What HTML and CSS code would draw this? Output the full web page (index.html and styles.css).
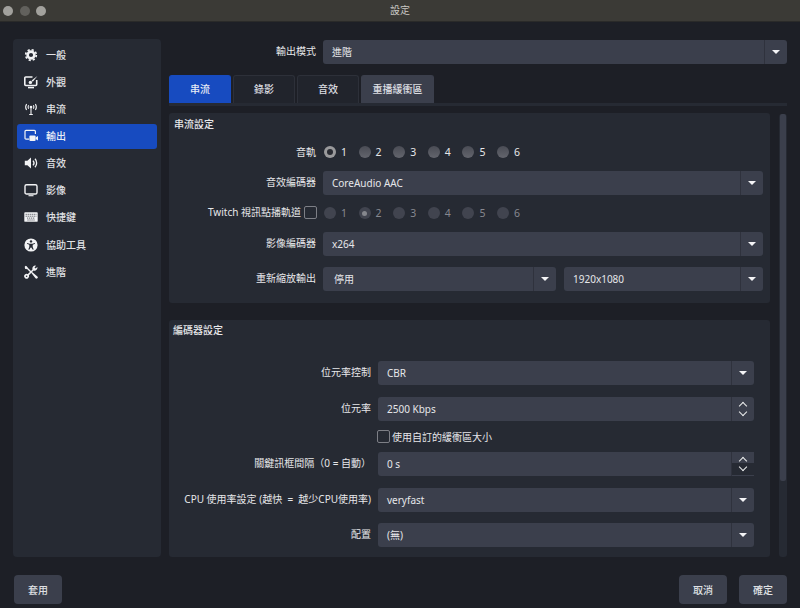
FILE: index.html
```html
<!DOCTYPE html>
<html lang="zh-Hant">
<head>
<meta charset="utf-8">
<title>設定</title>
<link rel="stylesheet" href="styles.css">
</head>
<body>
<div class="window">
  <header class="titlebar">
    <div class="lights"><span class="light"></span><span class="light light-dim"></span><span class="light"></span></div>
    <div class="title">設定</div>
  </header>
  <main class="main">
    <nav class="sidebar">
      <div class="nav-item">
        <svg class="icon" viewBox="0 0 14 14"><circle cx="7" cy="7" r="3.4" fill="none" stroke="currentColor" stroke-width="2.6"/><circle cx="7" cy="7" r="5.3" fill="none" stroke="currentColor" stroke-width="1.7" stroke-dasharray="2.2 1.96"/></svg>
        <span>一般</span>
      </div>
      <div class="nav-item">
        <svg class="icon" viewBox="0 0 14 14"><path d="M8.5 2H1.7a.9.9 0 0 0-.9.9v6.7a.9.9 0 0 0 .9.9h10.1a.9.9 0 0 0 .9-.9V5" fill="none" stroke="currentColor" stroke-width="1.6"/><path d="M4 12.6h6" stroke="currentColor" stroke-width="1.5"/><path d="M13.4.9 7.6 5.6l1.2 1.2z" fill="currentColor"/><circle cx="6.4" cy="7.4" r="1.7" fill="currentColor"/></svg>
        <span>外觀</span>
      </div>
      <div class="nav-item">
        <svg class="icon" viewBox="0 0 14 14"><circle cx="7" cy="5" r="1.3" fill="currentColor"/><path d="M7 5v7.5M5.2 12.5h3.6M4.6 3.2a3.4 3.4 0 0 0 0 3.6M9.4 3.2a3.4 3.4 0 0 1 0 3.6M2.6 2a5.6 5.6 0 0 0 0 6M11.4 2a5.6 5.6 0 0 1 0 6" fill="none" stroke="currentColor" stroke-width="1.1"/></svg>
        <span>串流</span>
      </div>
      <div class="nav-item nav-active">
        <svg class="icon" viewBox="0 0 14 14"><path d="M5 10.2H2a1 1 0 0 1-1-1V2.4a1 1 0 0 1 1-1h8.4a1 1 0 0 1 1 1V5" fill="none" stroke="currentColor" stroke-width="1.2"/><rect x="5.4" y="6.4" width="6.2" height="5.6" rx="1" fill="currentColor"/><path d="M11.6 8.4 14 7v4.4l-2.4-1.4z" fill="currentColor"/></svg>
        <span>輸出</span>
      </div>
      <div class="nav-item">
        <svg class="icon" viewBox="0 0 14 14"><path d="M.8 4.8h2.6L7 1.6v10.8L3.4 9.2H.8z" fill="currentColor"/><path d="M9 4.6a3.6 3.6 0 0 1 0 4.8M11 2.8a6.2 6.2 0 0 1 0 8.4" fill="none" stroke="currentColor" stroke-width="1.3"/></svg>
        <span>音效</span>
      </div>
      <div class="nav-item">
        <svg class="icon" viewBox="0 0 14 14"><rect x="1" y="1.7" width="12" height="9.3" rx="1.6" fill="none" stroke="currentColor" stroke-width="1.4"/><path d="M4.5 12.7h5" stroke="currentColor" stroke-width="1.1"/></svg>
        <span>影像</span>
      </div>
      <div class="nav-item">
        <svg class="icon" viewBox="0 0 14 14"><rect x=".3" y="2.2" width="13.4" height="9.6" rx=".9" fill="currentColor"/><path d="M1.6 4.3h10.8M1.6 6.2h10.8M3 8.1h8M3.4 10h7.2" fill="none" stroke="#262a33" stroke-width=".7" stroke-dasharray="1.3 .7"/></svg>
        <span>快捷鍵</span>
      </div>
      <div class="nav-item nav-item-low">
        <svg class="icon" viewBox="0 0 14 14"><circle cx="7" cy="7" r="6.6" fill="currentColor"/><circle cx="7" cy="3.4" r="1.2" fill="#262a33"/><path d="M3.2 4.9 5.6 5.7h2.8l2.4-.8.3.9-2.4 1v2.1l1 2.5-.9.4L7.3 9.4h-.6l-1.5 2.4-.9-.4 1-2.5V6.8l-2.4-1z" fill="#262a33"/></svg>
        <span>協助工具</span>
      </div>
      <div class="nav-item">
        <svg class="icon" viewBox="0 0 14 14"><path d="M1.8 1.8 7 7" stroke="currentColor" stroke-width="1.4" fill="none"/><path d="M.7 1.7 1.7.7l1.6 1.2.1 1.4-1.1 1-1.2-.6zM7 7.6l.8-.8 5.6 4.6a1.2 1.2 0 0 1-1.9 1.9z" fill="currentColor"/><path d="M9.3 4.7 2.6 11.4" stroke="currentColor" stroke-width="1.5" fill="none"/><path d="M13.3 1.9 11.6 3.5 10.5 2.4 12 .7a2.9 2.9 0 0 0-3.5 3.7l1.1 1.1a2.9 2.9 0 0 0 3.7-3.6zM4.3 9.5a2.4 2.4 0 0 0-3.4 3.4 2.4 2.4 0 0 0 3.4-3.4z" fill="currentColor"/><circle cx="2.6" cy="11.3" r=".8" fill="#262a33"/></svg>
        <span>進階</span>
      </div>
    </nav>
    <section class="content">
      <div class="mode-row">
        <label class="label">輸出模式</label>
        <div class="combo"><span class="combo-text">進階</span><span class="combo-btn"><i class="arrow"></i></span></div>
      </div>
      <div class="tabs">
        <div class="tab tab-active">串流</div>
        <div class="tab">錄影</div>
        <div class="tab">音效</div>
        <div class="tab tab-raised">重播緩衝區</div>
      </div>
      <div class="scroll-area">
        <div class="panels">
          <div class="panel panel-stream">
            <div class="panel-title">串流設定</div>
            <div class="row row-radio">
              <label class="label label-track">音軌</label>
              <div class="radios">
                <span class="radio-item"><i class="radio radio-on"></i>1</span>
                <span class="radio-item"><i class="radio"></i>2</span>
                <span class="radio-item"><i class="radio"></i>3</span>
                <span class="radio-item"><i class="radio"></i>4</span>
                <span class="radio-item"><i class="radio"></i>5</span>
                <span class="radio-item"><i class="radio"></i>6</span>
              </div>
            </div>
            <div class="row">
              <label class="label">音效編碼器</label>
              <div class="combo"><span class="combo-text">CoreAudio AAC</span><span class="combo-btn"><i class="arrow"></i></span></div>
            </div>
            <div class="row row-radio">
              <label class="label label-check">Twitch 視訊點播軌道<i class="check"></i></label>
              <div class="radios radios-off">
                <span class="radio-item"><i class="radio"></i>1</span>
                <span class="radio-item"><i class="radio radio-dot"></i>2</span>
                <span class="radio-item"><i class="radio"></i>3</span>
                <span class="radio-item"><i class="radio"></i>4</span>
                <span class="radio-item"><i class="radio"></i>5</span>
                <span class="radio-item"><i class="radio"></i>6</span>
              </div>
            </div>
            <div class="row">
              <label class="label">影像編碼器</label>
              <div class="combo"><span class="combo-text">x264</span><span class="combo-btn"><i class="arrow"></i></span></div>
            </div>
            <div class="row row-rescale">
              <label class="label">重新縮放輸出</label>
              <div class="pair">
                <div class="combo"><span class="combo-text combo-text-wide">停用</span><span class="combo-btn"><i class="arrow"></i></span></div>
                <div class="combo"><span class="combo-text">1920x1080</span><span class="combo-btn"><i class="arrow"></i></span></div>
              </div>
            </div>
          </div>
          <div class="panel panel-encoder">
            <div class="panel-title panel-title-enc">編碼器設定</div>
            <div class="row row-enc">
              <label class="label">位元率控制</label>
              <div class="combo"><span class="combo-text">CBR</span><span class="combo-btn"><i class="arrow"></i></span></div>
            </div>
            <div class="row row-enc row-flush">
              <label class="label">位元率</label>
              <div class="combo"><span class="combo-text">2500 Kbps</span><span class="combo-btn spin"><i class="chev chev-up"></i><i class="chev chev-down"></i></span></div>
            </div>
            <div class="row row-enc row-check">
              <span></span>
              <label class="check-label"><i class="check"></i>使用自訂的緩衝區大小</label>
            </div>
            <div class="row row-enc">
              <label class="label">關鍵訊框間隔（0 = 自動）</label>
              <div class="combo"><span class="combo-text">0 s</span><span class="combo-btn spin spin-hover"><i class="chev chev-up"></i><i class="chev chev-down"></i></span></div>
            </div>
            <div class="row row-enc row-snug">
              <label class="label">CPU 使用率設定 (越快 &nbsp;=&nbsp; 越少CPU使用率)</label>
              <div class="combo"><span class="combo-text">veryfast</span><span class="combo-btn"><i class="arrow"></i></span></div>
            </div>
            <div class="row row-enc row-flush">
              <label class="label">配置</label>
              <div class="combo"><span class="combo-text">(無)</span><span class="combo-btn"><i class="arrow"></i></span></div>
            </div>
          </div>
        </div>
        <div class="scrollbar"><div class="thumb"></div></div>
      </div>
    </section>
  </main>
  <footer class="footer">
    <button class="btn">套用</button>
    <div class="footer-right">
      <button class="btn">取消</button>
      <button class="btn">確定</button>
    </div>
  </footer>
</div>
</body>
</html>
```
FILE: styles.css
```css
* { box-sizing: border-box; }
html, body { margin: 0; padding: 0; }
body {
  width: 800px;
  height: 608px;
  overflow: hidden;
  background: #1d1f26;
  color: #e6e7ea;
  font-family: "Noto Sans", "Noto Sans CJK TC", sans-serif;
  font-size: 10px;
  line-height: 14px;
}
.window { display: flex; flex-direction: column; height: 608px; }

.titlebar {
  position: relative;
  flex: none;
  height: 22px;
  background: #3b3a36;
  border-bottom: 1px solid #2a2a29;
  display: flex;
  align-items: center;
  justify-content: center;
}
.lights { position: absolute; left: 3px; top: 6px; display: flex; gap: 6.5px; }
.light { width: 10px; height: 10px; border-radius: 50%; background: #a2a19d; }
.light-dim { background: #62615d; }
.title { color: #c9c8c4; font-size: 10px; margin-top: -2px; }

.main { flex: none; display: flex; height: 535px; padding: 17px 13px 0; gap: 8px; }

.sidebar {
  flex: none;
  width: 148px;
  height: 518px;
  background: #262a33;
  border-radius: 4px;
  padding: 4px;
  display: flex;
  flex-direction: column;
  gap: 2px;
}
.nav-item {
  display: flex;
  align-items: center;
  gap: 8px;
  height: 25px;
  padding: 0 0 2px 7px;
  border-radius: 3px;
  color: #e0e1e5;
  font-weight: 500;
}
.nav-item-low { margin-top: 1px; }
.nav-active { background: #174bc0; color: #e8ecf6; }
.icon { flex: none; width: 14px; height: 14px; color: #f2f3f5; }

.content { flex: 1; min-width: 0; display: flex; flex-direction: column; }

.mode-row {
  display: grid;
  grid-template-columns: 147px 1fr;
  column-gap: 7px;
  margin-top: 1px;
}
.label {
  display: flex;
  align-items: center;
  justify-content: flex-end;
  gap: 3px;
  padding-bottom: 2px;
  text-align: right;
  white-space: pre;
}
.label-check { margin-right: -1px; }
.label-track { padding-bottom: 0; }

.combo {
  display: flex;
  align-items: center;
  justify-content: space-between;
  height: 24px;
  min-width: 0;
  background: #3b3f4c;
  border-radius: 3px;
}
.combo-text { padding-left: 9px; }
.combo-text-wide { padding-left: 11px; }
.combo-btn {
  flex: none;
  width: 23px;
  height: 100%;
  border-left: 1px solid #2f323d;
  display: flex;
  align-items: center;
  justify-content: center;
}
.arrow {
  display: block;
  width: 0;
  height: 0;
  border-left: 4px solid transparent;
  border-right: 4px solid transparent;
  border-top: 4px solid #f4f4f6;
}
.spin { flex-direction: column; }
.spin-hover { background: linear-gradient(#3b3f4c 45%, #262a33 45%, #262a33 96%, #3b3f4c 96%); }
.chev {
  display: block;
  width: 6px;
  height: 6px;
  border-left: 1px solid #eceded;
  border-top: 1px solid #eceded;
}
.chev-up { transform: rotate(45deg); }
.chev-down { transform: rotate(225deg); }

.tabs {
  display: flex;
  gap: 2px;
  margin-top: 11px;
  height: 31px;
  border-bottom: 3px solid #262a33;
}
.tab {
  width: 62px;
  height: 28px;
  display: flex;
  align-items: center;
  justify-content: center;
  padding-bottom: 2px;
  background: #21242c;
  border: 1px solid #2d3039;
  border-bottom: 0;
  border-radius: 3px 3px 0 0;
  color: #dcdde1;
  font-weight: 500;
}
.tab-active { background: #174bc0; border-color: #174bc0; color: #e6eaf5; }
.tab-raised { width: 73px; background: #3b3f4c; border-color: #3b3f4c; }

.scroll-area { display: flex; margin-top: 7px; }
.panels { flex: none; width: 601px; display: flex; flex-direction: column; gap: 17px; }
.panel { background: #262a33; border-radius: 3px; }
.panel-stream { height: 190px; padding-right: 7px; }
.panel-encoder { height: 237px; padding-right: 16px; }
.panel-title { height: 27px; padding: 4px 0 0 5px; font-weight: 500; }
.panel-title-enc { height: 41px; padding: 3px 0 0 4px; }

.row {
  display: grid;
  grid-template-columns: 147px 1fr;
  column-gap: 7px;
  align-items: center;
  padding-bottom: 6px;
}
.row-radio { height: 31px; padding-bottom: 7px; }
.row-rescale { margin-top: 5px; padding-bottom: 0; }
.pair { display: grid; grid-template-columns: 233px 1fr; column-gap: 8px; }

.row-enc { grid-template-columns: 202px 1fr; padding-bottom: 12px; }
.row-flush { padding-bottom: 0; }
.row-snug { padding-bottom: 11px; }
.row-check { height: 31px; padding-bottom: 0; }

.radios { display: flex; font-size: 10.5px; }
.radio-item { width: 34.6px; display: flex; align-items: center; gap: 5px; padding-left: 1px; }
.radio {
  position: relative;
  flex: none;
  width: 12px;
  height: 12px;
  border-radius: 50%;
  background: linear-gradient(#4a4c55, #63656d);
}
.radio-on { background: #9a9a9c; }
.radio-on::after {
  content: "";
  position: absolute;
  inset: 3px;
  border-radius: 50%;
  background: #2a2c33;
}
.radios-off { color: #868890; }
.radios-off .radio { background: #41444f; }
.radios-off .radio-dot::after {
  content: "";
  position: absolute;
  inset: 3.5px;
  border-radius: 50%;
  background: #85878d;
}

.check {
  display: block;
  flex: none;
  width: 13px;
  height: 13px;
  border: 1px solid #7d7f86;
  border-radius: 2px;
  background: #262a33;
}
.check-label { display: flex; align-items: center; gap: 2px; margin-left: -1px; }

.scrollbar {
  flex: none;
  width: 8px;
  height: 443px;
  margin: 1px 0 0 9px;
  background: #262a33;
  border-radius: 3px;
}
.thumb { width: 6px; height: 367px; margin-left: 1px; background: #3b3f4c; border-radius: 2px; }

.footer {
  flex: none;
  display: flex;
  justify-content: space-between;
  padding: 18px 13px 0 14px;
}
.footer-right { display: flex; gap: 12px; }
.btn {
  width: 48px;
  height: 29px;
  padding: 0;
  border: 0;
  border-radius: 4px;
  background: #3b3f4c;
  color: #dfe0e3;
  font: inherit;
  font-weight: 500;
}
```
